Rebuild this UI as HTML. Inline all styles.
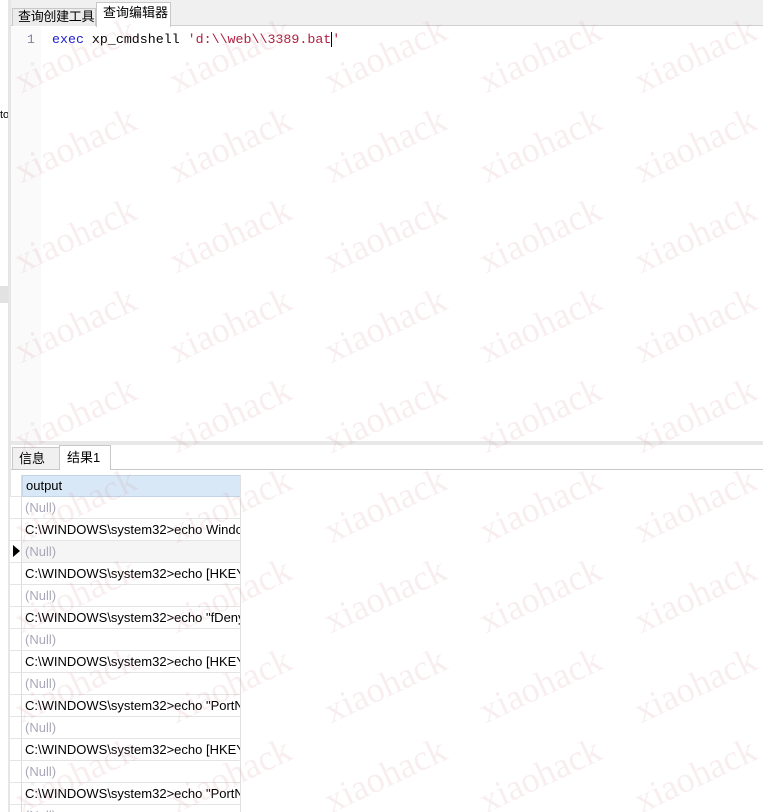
<!DOCTYPE html>
<html><head><meta charset="utf-8"><style>
*{margin:0;padding:0;box-sizing:border-box}
html,body{width:763px;height:812px;overflow:hidden}
body{position:relative;background:#fff;font-family:"Liberation Sans","Noto Sans CJK SC",sans-serif;font-size:13px;color:#000}
.abs{position:absolute}
.wm{position:absolute;font-family:"Liberation Serif",serif;font-size:36px;color:rgba(205,140,150,0.15);transform:translate(-50%,-50%) rotate(-25deg);white-space:nowrap;pointer-events:none;z-index:10}
.row{position:absolute;left:22px;width:218px;height:22px;border-bottom:1px solid #e4e4e4;line-height:21px;padding-left:3px;white-space:nowrap;overflow:hidden;font-size:13px}
.null{color:#a8a8b8}
.rh{position:absolute;left:10px;width:12px;height:22px;border-bottom:1px solid #e4e4e4;border-right:1px solid #dcdcdc;background:#fff}
</style></head><body>
<div class="abs" style="left:0;top:0;width:8px;height:812px;background:#fff"></div>
<div class="abs" style="left:0;top:286px;width:8px;height:17px;background:#e2e2e2"></div>
<div class="abs" style="left:0;top:109px;font-size:11px;line-height:12px;width:8px;overflow:hidden">to</div>
<div class="abs" style="left:8px;top:0;width:3px;height:812px;background:#e6e6e6"></div>
<div class="abs" style="left:11px;top:0;width:752px;height:26px;background:#f0f0f0;border-bottom:1px solid #d0d0d0"></div>
<div class="abs" style="left:12px;top:8px;width:84px;height:18px;background:#ececec;border:1px solid #c8c8c8;border-bottom:none;font-size:13px;line-height:16px;padding-left:5px;white-space:nowrap;overflow:hidden;letter-spacing:-0.3px">查询创建工具</div>
<div class="abs" style="left:96px;top:2px;width:75px;height:25px;background:#fff;border:1px solid #c8c8c8;border-bottom:none;font-size:13px;line-height:20px;padding-left:6px;white-space:nowrap">查询编辑器</div>
<div class="abs" style="left:11px;top:27px;width:30px;height:414px;background:#fafafa"></div>
<div class="abs" style="left:27px;top:32px;font-family:'Liberation Mono',monospace;font-size:13px;color:#8080a0">1</div>
<div class="abs" style="left:52px;top:32px;font-family:'Liberation Mono',monospace;font-size:13.3px;white-space:pre"><span style="color:#2020d0">exec</span> xp_cmdshell <span style="color:#b02040">'d:\\web\\3389.bat</span><span style="border-left:1px solid #000"></span><span style="color:#b02040">'</span></div>
<div class="abs" style="left:11px;top:441px;width:752px;height:4px;background:#e8e8e8"></div>
<div class="abs" style="left:11px;top:469px;width:752px;height:1px;background:#c8c8c8"></div>
<div class="abs" style="left:12px;top:447px;width:48px;height:22px;background:#f0f0f0;border:1px solid #c8c8c8;border-bottom:none;line-height:22px;padding-left:6px">信息</div>
<div class="abs" style="left:59px;top:445px;width:52px;height:25px;background:#fff;border:1px solid #c8c8c8;border-bottom:none;line-height:24px;padding-left:7px">结果1</div>
<div class="abs" style="left:10px;top:475px;width:12px;height:22px;border-bottom:1px solid #e4e4e4;border-right:1px solid #dcdcdc"></div>
<div class="abs" style="left:22px;top:475px;width:219px;height:22px;background:#d9e8f6;border:1px solid #c4d4e4;line-height:20px;padding-left:3px;font-size:13px">output</div>
<div class="abs" style="left:240px;top:475px;width:1px;height:337px;background:#e0e0e0"></div>
<div class="rh" style="top:497px"></div><div class="row null" style="top:497px">(Null)</div>
<div class="rh" style="top:519px"></div><div class="row" style="top:519px">C:\WINDOWS\system32&gt;echo Windows</div>
<div class="rh" style="top:541px"></div><div class="abs" style="left:13px;top:545px;width:0;height:0;border-top:6px solid transparent;border-bottom:6px solid transparent;border-left:7px solid #000"></div><div class="row null" style="top:541px;background:#f5f5f5">(Null)</div>
<div class="rh" style="top:563px"></div><div class="row" style="top:563px">C:\WINDOWS\system32&gt;echo [HKEY_</div>
<div class="rh" style="top:585px"></div><div class="row null" style="top:585px">(Null)</div>
<div class="rh" style="top:607px"></div><div class="row" style="top:607px">C:\WINDOWS\system32&gt;echo "fDenyT</div>
<div class="rh" style="top:629px"></div><div class="row null" style="top:629px">(Null)</div>
<div class="rh" style="top:651px"></div><div class="row" style="top:651px">C:\WINDOWS\system32&gt;echo [HKEY_</div>
<div class="rh" style="top:673px"></div><div class="row null" style="top:673px">(Null)</div>
<div class="rh" style="top:695px"></div><div class="row" style="top:695px">C:\WINDOWS\system32&gt;echo "PortN</div>
<div class="rh" style="top:717px"></div><div class="row null" style="top:717px">(Null)</div>
<div class="rh" style="top:739px"></div><div class="row" style="top:739px">C:\WINDOWS\system32&gt;echo [HKEY_</div>
<div class="rh" style="top:761px"></div><div class="row null" style="top:761px">(Null)</div>
<div class="rh" style="top:783px"></div><div class="row" style="top:783px">C:\WINDOWS\system32&gt;echo "PortN</div>
<div class="rh" style="top:805px"></div><div class="row null" style="top:805px">(Null)</div>
<div id="wms"></div>
<script>
var h='';var xs=[75,230,385,540,695];
for(var y=55;y<=860;y+=90){for(var i=0;i<xs.length;i++){h+='<div class="wm" style="left:'+xs[i]+'px;top:'+y+'px">xiaohack</div>';}}
document.getElementById('wms').innerHTML=h;
</script>
</body></html>
